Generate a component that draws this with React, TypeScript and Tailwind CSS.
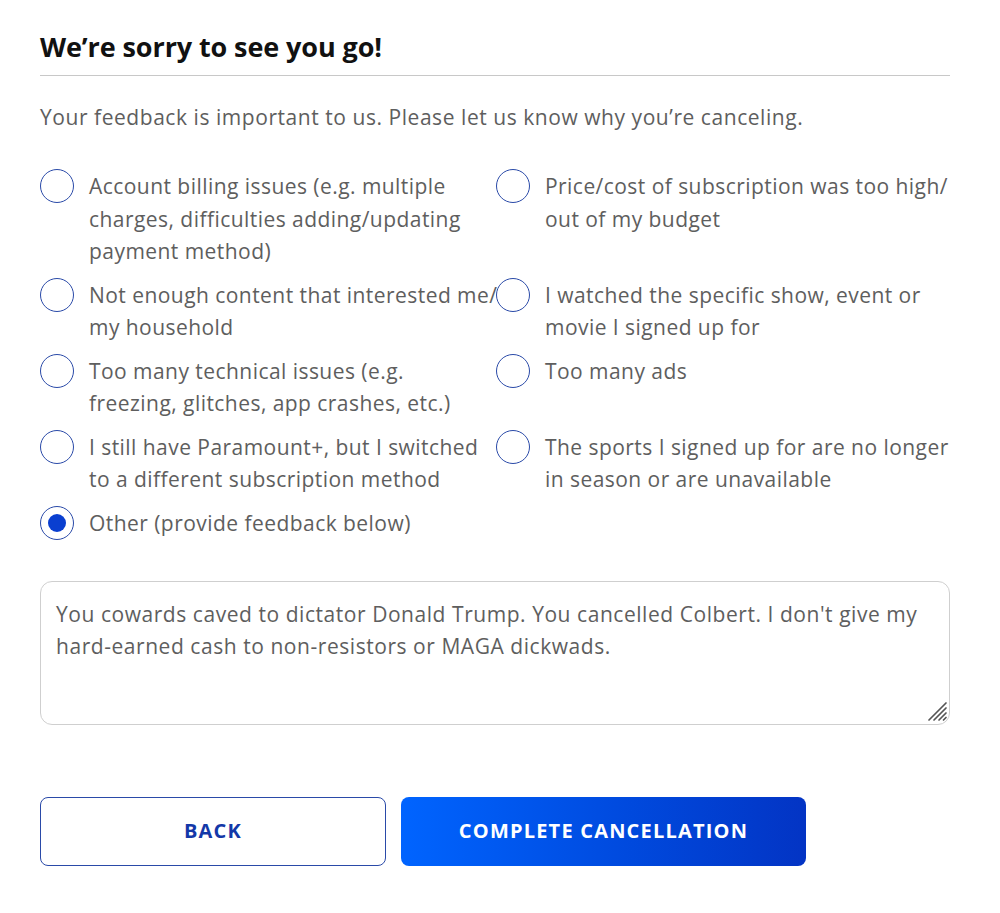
import React, { useState } from 'react';

interface Reason {
    id: string;
    lines: string[];
}

// Linhas quebradas como na tela original
const reasons: Reason[] = [
    { id: 'billing', lines: ['Account billing issues (e.g. multiple', 'charges, difficulties adding/updating', 'payment method)'] },
    { id: 'price', lines: ['Price/cost of subscription was too high/', 'out of my budget'] },
    { id: 'content', lines: ['Not enough content that interested me/', 'my household'] },
    { id: 'watched', lines: ['I watched the specific show, event or', 'movie I signed up for'] },
    { id: 'technical', lines: ['Too many technical issues (e.g.', 'freezing, glitches, app crashes, etc.)'] },
    { id: 'ads', lines: ['Too many ads'] },
    { id: 'switched', lines: ['I still have Paramount+, but I switched', 'to a different subscription method'] },
    { id: 'sports', lines: ['The sports I signed up for are no longer', 'in season or are unavailable'] },
    { id: 'other', lines: ['Other (provide feedback below)'] },
];

const font = '"Open Sans", "Noto Sans", sans-serif';

const RadioOption: React.FC<{ reason: Reason; checked: boolean; onSelect: () => void }> = ({ reason, checked, onSelect }) => (
    <label className="flex items-start cursor-pointer" onClick={onSelect}>
        {/* Círculo do radio */}
        <span className="mt-[-1px] flex h-[34px] w-[34px] shrink-0 items-center justify-center rounded-full border-[1.5px] border-[#2a4aa8] bg-white">
            {checked && <span className="h-[18px] w-[18px] rounded-full bg-[#0a3fd0]" />}
        </span>
        <span className="ml-[15px] text-[21px] tracking-[0.45px] leading-[32.5px] text-[#5e5e5e]">
            {reason.lines.map((line, i) => (
                <span key={i} className="block whitespace-nowrap">{line}</span>
            ))}
        </span>
    </label>
);

export default function App() {
    const [selected, setSelected] = useState('other');
    const [feedback, setFeedback] = useState(
        "You cowards caved to dictator Donald Trump. You cancelled Colbert. I don't give my hard-earned cash to non-resistors or MAGA dickwads."
    );

    return (
        <div className="min-h-screen bg-white" style={{ fontFamily: font }}>
            <div className="ml-[40px] w-[910px] pt-[28px]">
                <h1 className="text-[27px] font-bold leading-[38px] tracking-[-0.1px] text-[#111]">We’re sorry to see you go!</h1>
                <div className="mt-[9px] h-px bg-[#c8c8c8]" />

                <p className="mt-[25px] text-[21px] tracking-[0.55px] leading-[32px] text-[#5e5e5e]">
                    Your feedback is important to us. Please let us know why you’re canceling.
                </p>

                <div className="mt-[37px] grid grid-cols-[456px_454px] gap-y-[11px]">
                    {reasons.map((r) => (
                        <RadioOption key={r.id} reason={r} checked={selected === r.id} onSelect={() => setSelected(r.id)} />
                    ))}
                </div>

                {/* Campo de feedback com alça de redimensionamento desenhada */}
                <div className="relative mt-[41px]">
                    <textarea
                        value={feedback}
                        onChange={(e) => setFeedback(e.target.value)}
                        className="block h-[144px] w-full resize-none rounded-[12px] border border-[#cfcfcf] px-[15px] py-[16px] text-[21px] tracking-[0.55px] leading-[32px] text-[#5e5e5e] outline-none"
                        style={{ fontFamily: font }}
                    />
                    <svg className="pointer-events-none absolute bottom-[3px] right-[2px]" width="22" height="22" viewBox="0 0 22 22">
                        <path d="M20 3 L3 20 M20 8 L8 20 M20 13 L13 20 M20 17.5 L17.5 20" stroke="#555" strokeWidth="1.7" strokeLinecap="round" />
                    </svg>
                </div>

                <div className="mt-[72px] flex gap-[15px]">
                    <button
                        type="button"
                        className="h-[69px] w-[346px] rounded-[8px] border-[1.5px] border-[#2a4aa8] bg-white text-[20px] font-bold tracking-[1.2px] text-[#1338a8]"
                    >
                        BACK
                    </button>
                    <button
                        type="button"
                        className="h-[69px] w-[405px] rounded-[8px] bg-gradient-to-r from-[#0064ff] to-[#0334c4] text-[20px] font-bold tracking-[1.2px] text-white"
                    >
                        COMPLETE CANCELLATION
                    </button>
                </div>
            </div>
        </div>
    );
}
